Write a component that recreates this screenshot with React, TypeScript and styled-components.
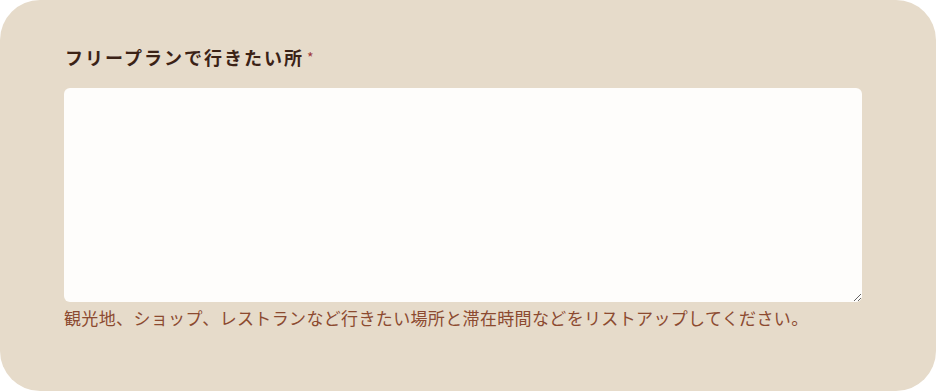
import React from "react";
import styled, { createGlobalStyle } from "styled-components";

const Global = createGlobalStyle`
  html, body { margin: 0; padding: 0; background: #ffffff; }
  * { box-sizing: border-box; }
`;

const Card = styled.section`
  width: 936px;
  height: 391px;
  background: #e6dbca;
  border-radius: 40px;
  padding: 44px 74px 0 64px;
  display: flex;
  flex-direction: column;
  font-family: "Noto Sans CJK JP", "Noto Sans", sans-serif;
`;

const Label = styled.label`
  font-size: 18px;
  line-height: 27px;
  font-weight: 700;
  letter-spacing: 2px;
  color: #3b2216;
  padding-left: 1px;
`;

const Required = styled.span`
  color: #a0383a;
  font-size: 14px;
  font-weight: 400;
  margin-left: 3px;
  vertical-align: 2px;
`;

const TextArea = styled.textarea`
  margin-top: 17px;
  width: 100%;
  height: 214px;
  border: none;
  border-radius: 6px;
  background: #fefdfb;
  resize: vertical;
  outline: none;
  font-family: inherit;
  font-size: 16px;
  padding: 12px;
`;

const Helper = styled.p`
  margin: 3px 0 0;
  font-size: 17px;
  line-height: 25px;
  color: #8c4a30;
  letter-spacing: 0.35px;
`;

export default function App() {
  return (
    <>
      <Global />
      <Card>
        <Label htmlFor="places">
          フリープランで行きたい所<Required>*</Required>
        </Label>
        <TextArea id="places" />
        <Helper>
          観光地、ショップ、レストランなど行きたい場所と滞在時間などをリストアップしてください。
        </Helper>
      </Card>
    </>
  );
}
